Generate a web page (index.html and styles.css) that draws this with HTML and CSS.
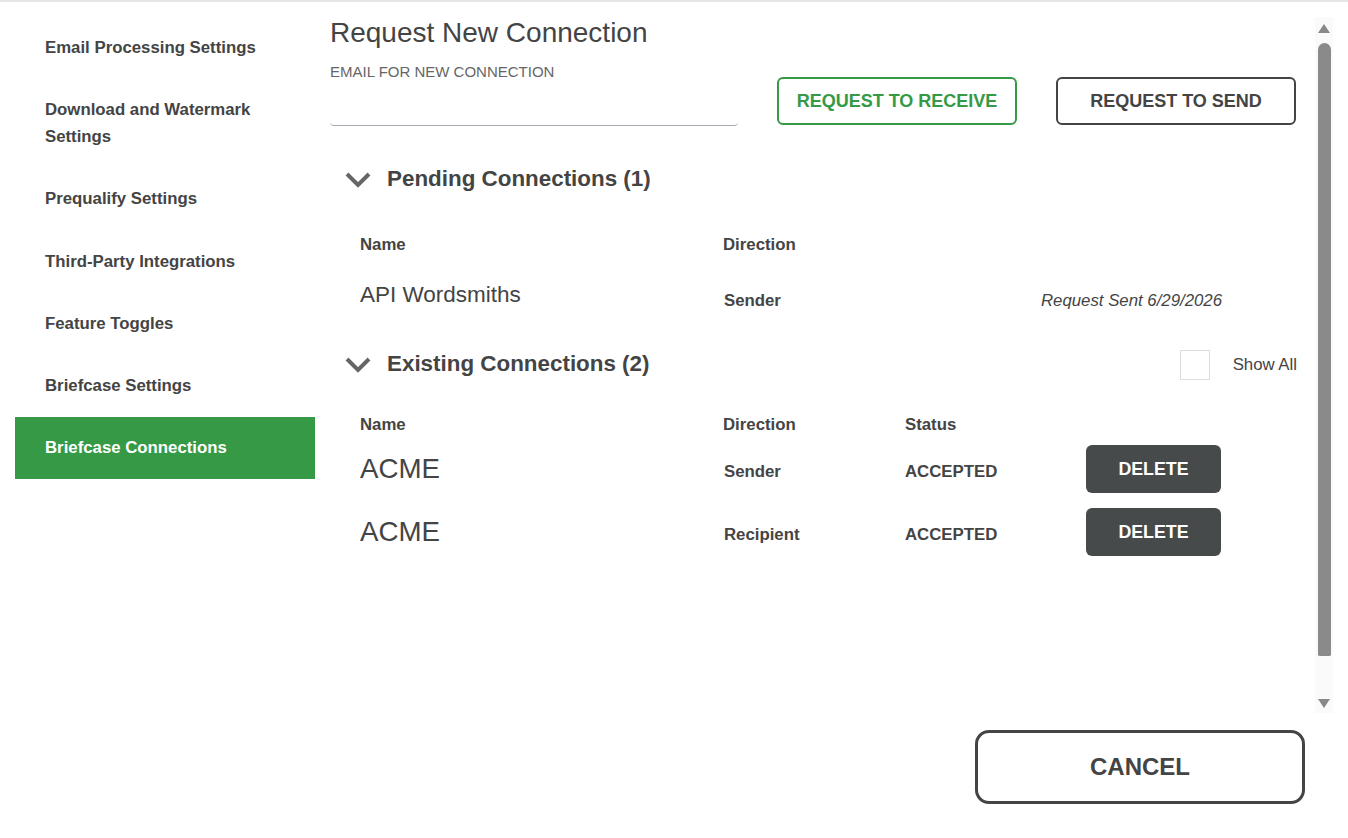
FILE: index.html
```html
<!DOCTYPE html>
<html lang="en">
<head>
    <meta charset="UTF-8">
    <meta name="viewport" content="width=device-width, initial-scale=1.0">
    <title>Settings - Briefcase Connections</title>
    <link rel="stylesheet" href="styles.css">
</head>
<body>
    <div class="layout">
        <nav class="sidebar">
            <a href="#" class="side-item">Email Processing Settings</a>
            <a href="#" class="side-item">Download and Watermark Settings</a>
            <a href="#" class="side-item">Prequalify Settings</a>
            <a href="#" class="side-item">Third-Party Integrations</a>
            <a href="#" class="side-item">Feature Toggles</a>
            <a href="#" class="side-item">Briefcase Settings</a>
            <a href="#" class="side-item active">Briefcase Connections</a>
        </nav>

        <div class="main">
            <div class="scroll-area">
                <div class="content">
                    <div class="request-row">
                        <div class="request-field">
                            <h1>Request New Connection</h1>
                            <label for="emailInput">EMAIL FOR NEW CONNECTION</label>
                            <input type="email" id="emailInput">
                        </div>
                        <button class="btn-outline green">REQUEST TO RECEIVE</button>
                        <button class="btn-outline">REQUEST TO SEND</button>
                    </div>

                    <!-- Conexões pendentes -->
                    <div class="section-header pending-header">
                        <svg class="chevron" width="26" height="16" viewBox="0 0 26 16">
                            <path d="M2 2 L13 13 L24 2" fill="none" stroke="#666" stroke-width="4"/>
                        </svg>
                        <h2>Pending Connections (1)</h2>
                    </div>
                    <div class="table pending">
                        <div class="table-head">
                            <div>Name</div>
                            <div>Direction</div>
                            <div></div>
                        </div>
                        <div class="table-row pending-row">
                            <div class="cell-name small-name">API Wordsmiths</div>
                            <div class="cell-small">Sender</div>
                            <div class="cell-date">Request Sent 6/29/2026</div>
                        </div>
                    </div>

                    <!-- Conexões existentes -->
                    <div class="section-header existing-header">
                        <svg class="chevron" width="26" height="16" viewBox="0 0 26 16">
                            <path d="M2 2 L13 13 L24 2" fill="none" stroke="#666" stroke-width="4"/>
                        </svg>
                        <h2>Existing Connections (2)</h2>
                        <label class="show-all">
                            <span class="checkbox"></span>
                            <span>Show All</span>
                        </label>
                    </div>
                    <div class="table existing">
                        <div class="table-head">
                            <div>Name</div>
                            <div>Direction</div>
                            <div>Status</div>
                            <div></div>
                        </div>
                        <div class="table-row">
                            <div class="cell-name">ACME</div>
                            <div class="cell-small">Sender</div>
                            <div class="cell-small status">ACCEPTED</div>
                            <div><button class="btn-delete">DELETE</button></div>
                        </div>
                        <div class="table-row">
                            <div class="cell-name">ACME</div>
                            <div class="cell-small">Recipient</div>
                            <div class="cell-small status">ACCEPTED</div>
                            <div><button class="btn-delete">DELETE</button></div>
                        </div>
                    </div>
                </div>

                <div class="scrollbar">
                    <div class="arrow up"></div>
                    <div class="thumb"></div>
                    <div class="arrow down"></div>
                </div>
            </div>

            <div class="footer">
                <button class="btn-cancel">CANCEL</button>
            </div>
        </div>
    </div>
</body>
</html>
```

FILE: styles.css
```css
body {
    font-family: "Liberation Sans", Arial, sans-serif;
    margin: 0;
    padding: 0;
    background-color: white;
    color: #444;
    border-top: 2px solid #e6e6e6;
}
.layout {
    display: flex;
    padding: 15px 0 0 15px;
}
.sidebar {
    width: 300px;
    flex-shrink: 0;
    display: flex;
    flex-direction: column;
}
.side-item {
    display: block;
    padding: 17px 30px 18.2px 30px;
    line-height: 27px;
    font-size: 16.8px;
    font-weight: bold;
    color: #444;
    text-decoration: none;
}
.side-item.active {
    background-color: #359946;
    color: white;
}
.main {
    flex: 1;
    margin-left: 15px;
}
.scroll-area {
    display: flex;
    height: 696px;
}
.content {
    flex: 1;
    margin-right: 18px;
}
.request-row {
    display: flex;
    align-items: flex-end;
}
.request-field {
    width: 408px;
    display: flex;
    flex-direction: column;
}
.request-field h1 {
    font-size: 28px;
    font-weight: normal;
    line-height: 32px;
    margin: 0;
}
.request-field label {
    font-size: 15px;
    line-height: 16px;
    color: #666;
    margin-top: 15px;
}
.request-field input {
    height: 45px;
    border: none;
    border-bottom: 1px solid #a9a9b3;
    border-radius: 4px;
    outline: none;
    padding: 0;
}
.btn-outline {
    width: 240px;
    height: 48px;
    margin-left: 39px;
    margin-bottom: 1px;
    background: white;
    border: 2px solid #444;
    border-radius: 6px;
    font-family: inherit;
    font-size: 18px;
    font-weight: bold;
    color: #444;
    cursor: pointer;
}
.btn-outline.green {
    border-color: #359946;
    color: #359946;
}
.section-header {
    display: flex;
    align-items: center;
    height: 40px;
    padding-left: 15px;
}
.pending-header {
    margin-top: 33px;
}
.existing-header {
    margin-top: 22px;
}
.chevron {
    margin-right: 16px;
    margin-top: 2px;
}
.section-header h2 {
    font-size: 22.4px;
    font-weight: bold;
    margin: 0;
    flex: 1;
}
.show-all {
    display: flex;
    align-items: center;
    font-size: 16.8px;
    margin-top: 2px;
    cursor: pointer;
}
.checkbox {
    width: 28px;
    height: 28px;
    border: 1px solid #ddd;
    margin-right: 23px;
}
.table {
    padding-left: 30px;
    width: 862px;
}
.table-head,
.table-row {
    display: grid;
    grid-template-columns: 363px 182px 181px 136px;
    align-items: center;
}
.pending .table-head,
.pending .table-row {
    grid-template-columns: 363px 182px 1fr;
}
.table-head {
    height: 24px;
    font-size: 16.8px;
    font-weight: bold;
}
.pending .table-head {
    margin-top: 34px;
}
.existing .table-head {
    margin-top: 29px;
}
.table-row {
    height: 48px;
}
.pending-row {
    margin-top: 17px;
}
.existing .table-row {
    margin-top: 8px;
}
.existing .table-row + .table-row {
    margin-top: 15px;
}
.cell-name {
    font-size: 27.7px;
}
.cell-name.small-name {
    font-size: 22.5px;
    padding-bottom: 6px;
}
.cell-small {
    font-size: 16.8px;
    font-weight: bold;
    padding-top: 6px;
    padding-left: 1px;
}
.cell-small.status {
    padding-left: 0;
}
.cell-date {
    font-size: 16.8px;
    font-style: italic;
    text-align: right;
    padding-top: 6px;
}
.btn-delete {
    width: 135px;
    height: 48px;
    background-color: #474a4b;
    color: white;
    border: none;
    border-radius: 6px;
    font-family: inherit;
    font-size: 17.8px;
    font-weight: bold;
    cursor: pointer;
}
.scrollbar {
    width: 18px;
    margin-right: 15px;
    background-color: #fafafa;
    display: flex;
    flex-direction: column;
    align-items: center;
}
.arrow {
    width: 0;
    height: 0;
    border-left: 6px solid transparent;
    border-right: 6px solid transparent;
}
.arrow.up {
    border-bottom: 9px solid #888;
    margin-top: 7px;
}
.arrow.down {
    border-top: 9px solid #888;
    margin-top: 43px;
}
.thumb {
    width: 13px;
    height: 613px;
    margin-top: 10px;
    background-color: #8a8a8a;
    border-radius: 7px 7px 2px 2px;
}
.footer {
    display: flex;
    justify-content: flex-end;
    padding: 17px 43px 0 0;
}
.btn-cancel {
    width: 330px;
    height: 74px;
    background: white;
    border: 3px solid #444;
    border-radius: 14px;
    font-family: inherit;
    font-size: 24px;
    font-weight: bold;
    color: #444;
    cursor: pointer;
}
```
